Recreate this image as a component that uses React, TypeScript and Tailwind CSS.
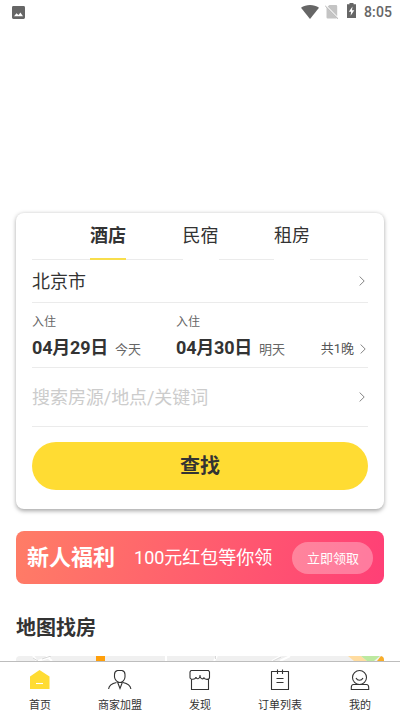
import React from "react";

function Chevron() {
  return (
    <svg className="h-[10px] w-[6px] shrink-0" viewBox="0 0 6 10" fill="none" stroke="#777" strokeWidth="0.9">
      <path d="M0.6 0.5 5.2 5 0.6 9.5" />
    </svg>
  );
}

function StatusBar() {
  return (
    <div className="flex h-6 shrink-0 items-center pl-[11.5px] pr-2 text-[#666]">
      <svg className="h-[13px] w-[13px]" viewBox="0 0 13 13">
        <path
          fill="currentColor"
          fillRule="evenodd"
          d="M1.4 0h10.2A1.4 1.4 0 0 1 13 1.4v10.2a1.4 1.4 0 0 1-1.4 1.4H1.4A1.4 1.4 0 0 1 0 11.600V1.4A1.4 1.4 0 0 1 1.400 0ZM2 10.200h9L8.400 6.500 6.500 9 4.500 7.200Z"
        />
      </svg>
      <svg className="mb-0.5 ml-auto h-[15px] w-[18px]" viewBox="0 0 18 15" fill="currentColor">
        <path d="M0 3.800C5 .2 13 .2 18 3.800L9 15Z" />
      </svg>
      <svg className="ml-[6px] h-[14px] w-[14px]" viewBox="0 0 14 14">
        <path fill="#c4c4c4" d="M4.500 0H11a1.200 1.200 0 0 1 1.200 1.200v10L2.600 1.600ZM1.500 2.800 12 13.300 11 13.500H2.700a1.200 1.200 0 0 1-1.200-1.200Z" />
        <path stroke="#aaa" strokeWidth="1" d="M.3 1 13 13.700" />
      </svg>
      <svg className="mb-[3px] ml-[8px] h-[15px] w-[9px]" viewBox="0 0 9 15">
        <path fill="currentColor" d="M2.500 0h4v1.200H9V15H0V1.200h2.500Z" />
        <path fill="#fff" d="M5.500 3.500 1.800 8.800h2.300L3.600 12.800 7.300 7.300H5Z" />
      </svg>
      <span className="ml-2 text-[14px] font-medium leading-6 tracking-[0.1px]">8:05</span>
    </div>
  );
}

const tabs = ["酒店", "民宿", "租房"];

function Tabs() {
  return (
    <div className="flex h-[47px] items-stretch text-[18px] leading-[46px]">
      <div className="flex-1 border-b border-[#ebebeb]" />
      {tabs.map((tab, i) => (
        <React.Fragment key={tab}>
          {i > 0 && (
            <div className={i === 1 ? "w-[56.5px] border-b border-[#ebebeb]" : "w-[55.5px] border-b border-[#ebebeb]"} />
          )}
          <div className={i === 0 ? "h-[47px] w-9 border-b-2 border-[#f8de4c] font-bold" : "h-[47px] w-9"}>{tab}</div>
        </React.Fragment>
      ))}
      <div className="flex-1 border-b border-[#ebebeb]" />
    </div>
  );
}

function StayDate({ date, day }: { date: string; day: string }) {
  return (
    <div className="w-36">
      <div className="text-[12px] leading-[18px] text-[#666]">入住</div>
      <div className="mt-1 flex items-baseline text-[18px] font-bold leading-[26px]">
        <span className="tracking-[-0.2px]">{date}</span>
        <span className="ml-[7px] text-[13px] font-normal text-[#666]">{day}</span>
      </div>
    </div>
  );
}

function SearchCard() {
  return (
    <section className="mx-4 mt-[189px] h-[296px] shrink-0 rounded-lg bg-white px-4 shadow-[0_1.5px_4px_rgba(0,0,0,0.35)]">
      <Tabs />
      <div className="flex h-[43px] items-center justify-between border-b border-[#ebebeb] pr-[3px] text-[18px]">
        北京市
        <Chevron />
      </div>
      <div className="flex h-[65px] border-b border-[#ebebeb] pr-[2px] pt-[10px]">
        <StayDate date="04月29日" day="今天" />
        <StayDate date="04月30日" day="明天" />
        <div className="mt-[23px] flex h-[26px] flex-1 items-center justify-end whitespace-nowrap text-[13px] text-[#555]">
          <span className="mr-[6px]">共1晚</span>
          <Chevron />
        </div>
      </div>
      <div className="flex h-[59px] items-center justify-between border-b border-[#ebebeb] pr-[3px] text-[18px] text-[#ccc]">
        <span className="tracking-[-0.06px]">搜索房源/地点/关键词</span>
        <Chevron />
      </div>
      <button className="mt-[15px] block h-12 w-full rounded-full bg-[#ffdc33] text-[20px] font-bold leading-[46px]">查找</button>
    </section>
  );
}

function Banner() {
  return (
    <section className="mx-4 mt-[22px] flex h-[53px] shrink-0 items-center rounded-lg bg-[linear-gradient(105deg,#ff7d66,#ff3f76)] pl-[11px] pr-[11px] text-white">
      <span className="text-[22px] font-bold">新人福利</span>
      <span className="ml-[19px] text-[18px]">100元红包等你领</span>
      <span className="ml-auto h-8 w-[81px] rounded-full bg-white/30 pl-[15px] text-[13px] leading-[33px]">立即领取</span>
    </section>
  );
}

function MapStrip() {
  return (
    <div className="mx-4 h-[5px] shrink-0 overflow-hidden rounded-t bg-[#f0f0f0]">
      <svg className="block h-[5px] w-[368px]" viewBox="0 0 368 5">
        <path d="M17 0l4 5M22 5 34 1M30 0l6 5M150 0v5M198 5l3-5M256 5l9-5M264 5l10-5" stroke="#fff" strokeWidth="2" fill="none" />
        <path d="M17 2l5 3M26 3l9-3M199.500 3V0M257 5l8-4" stroke="#c9c9c9" strokeWidth=".7" />
        <path d="M80 0h9v5h-9Z" fill="#ff9f0a" />
        <path d="M332 0h13l6 5H338Z" fill="#ffdca0" />
        <path d="M345 0h19l-6 5h-7Z" fill="#bce9a0" />
        <path d="m361 5 4-5h3v5Z" fill="#f8ad2a" />
      </svg>
    </div>
  );
}

const navItems = [
  {
    label: "首页",
    icon: (
      <>
        <path d="M2 8.500 11.500 2 21.500 8.500V21H2Z" fill="#ffdc33" stroke="none" />
        <path d="M8 15.500h7" stroke="#fff" />
      </>
    ),
  },
  {
    label: "商家加盟",
    icon: (
      <path d="M9.500 2.500H14C16 3 17 4.500 17 6.500V9C16.800 12 14.500 14.500 12 14.500C9.500 14.500 6.700 12 6.500 9V6.500C6.500 4.500 7.500 3 9.500 2.500ZM9.500 14 12 20.500 14.500 14M8.500 14.500C4 15.500 1 17.500.600 21M15 14.500C19.500 15.500 22.400 17.500 22.900 21" />
    ),
  },
  {
    label: "发现",
    icon: (
      <path d="M3 2.500H20.500L21.500 4V9.500C21.500 12 16.500 12 16 9.500C15.500 11.500 12.300 11.500 12 8V7V8C11.700 11.500 8.500 11.500 8 9C7.500 12 2 12 2 9.500V4ZM3.500 11.500V21.500H20.500V11.500" />
    ),
  },
  {
    label: "订单列表",
    icon: <path d="M3.500 3.500h17v18h-17ZM9.500 1.500v4.500M14.500 1.500v4.500M8.500 10.500h7M8.500 14.500h7" strokeLinejoin="round" />,
  },
  {
    label: "我的",
    icon: (
      <path d="M11.500 2.500a7 7 0 1 0 0 14 7 7 0 0 0 0-14ZM8 10C9.500 13 13.500 13 15 10M7 16.500H5.500c-1.700 0-2.200 1.200-2.200 3v2h17.400v-2c0-1.800-.5-3-2.200-3H7" />
    ),
  },
];

function BottomNav() {
  return (
    <nav className="flex h-[50px] shrink-0 border-t border-[#bdbdbd] bg-white">
      {navItems.map((item) => (
        <div key={item.label} className="flex flex-1 flex-col items-center pt-[6px]">
          <svg className="h-6 w-6 shrink-0" viewBox="0 0 24 24" fill="none" stroke="#333" strokeWidth="1.1">
            {item.icon}
          </svg>
          <span className="mt-[9px] shrink-0 text-[11px] leading-[10px]">{item.label}</span>
        </div>
      ))}
    </nav>
  );
}

export default function App() {
  return (
    <div className="flex h-[711px] w-[400px] flex-col overflow-hidden bg-white font-[Roboto,'Noto_Sans_CJK_SC',sans-serif] text-[#333]">
      <StatusBar />
      <SearchCard />
      <Banner />
      <h2 className="ml-[16px] mt-7 h-11 shrink-0 text-[20px] font-bold leading-8">地图找房</h2>
      <MapStrip />
      <BottomNav />
    </div>
  );
}
